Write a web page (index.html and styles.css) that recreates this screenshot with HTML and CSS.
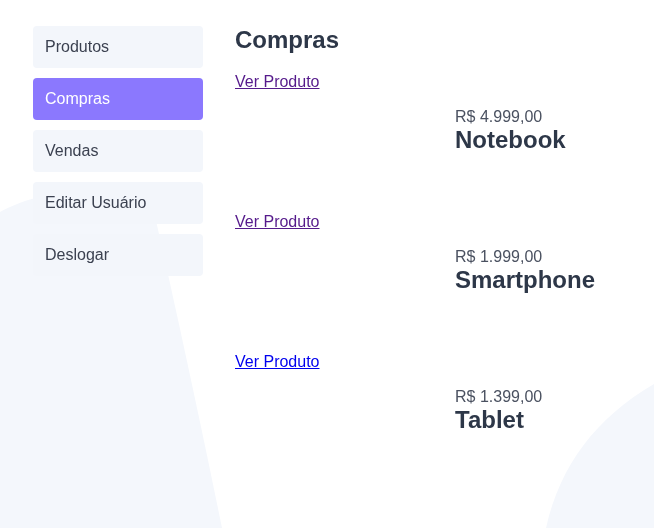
FILE: index.html
```html
<!DOCTYPE html>
<html lang="pt-BR">
<head>
<meta charset="utf-8">
<title>Compras</title>
<link rel="stylesheet" href="styles.css">
</head>
<body>
<svg class="bg" width="654" height="528" viewBox="0 0 654 528" aria-hidden="true">
  <path class="blob" d="M0,212 C20,200 70,186 118,184 L154,212 C174,300 200,420 222,528 L0,528 Z"/>
  <path class="blob" d="M546,528 C560,465 596,418 654,384 L654,528 Z"/>
</svg>
<div class="layout">
  <nav class="sidebar">
    <a class="nav-item" href="#">Produtos</a>
    <a class="nav-item active" href="#">Compras</a>
    <a class="nav-item" href="#">Vendas</a>
    <a class="nav-item" href="#">Editar Usuário</a>
    <a class="nav-item" href="#">Deslogar</a>
  </nav>
  <main class="content">
    <h2 class="title">Compras</h2>
    <div class="item">
      <a class="link visited" href="#">Ver Produto</a>
      <div class="row">
        <div class="thumb"></div>
        <div class="info">
          <div class="price">R$ 4.999,00</div>
          <div class="name">Notebook</div>
        </div>
      </div>
    </div>
    <div class="item">
      <a class="link visited" href="#">Ver Produto</a>
      <div class="row">
        <div class="thumb"></div>
        <div class="info">
          <div class="price">R$ 1.999,00</div>
          <div class="name">Smartphone</div>
        </div>
      </div>
    </div>
    <div class="item">
      <a class="link" href="#">Ver Produto</a>
      <div class="row">
        <div class="thumb"></div>
        <div class="info">
          <div class="price">R$ 1.399,00</div>
          <div class="name">Tablet</div>
        </div>
      </div>
    </div>
  </main>
</div>
</body>
</html>
```
FILE: styles.css
```css
html, body {
  margin: 0;
  padding: 0;
  background: #ffffff;
  font-family: "Liberation Sans", Arial, sans-serif;
  width: 654px;
  height: 528px;
  overflow: hidden;
}

.bg {
  position: fixed;
  left: 0;
  top: 0;
  z-index: 0;
}

.blob {
  fill: #f4f7fc;
}

.layout {
  position: relative;
  z-index: 1;
  display: flex;
  gap: 32px;
  padding: 26px 33px;
}

.sidebar {
  display: flex;
  flex-direction: column;
  gap: 10px;
  width: 170px;
  flex-shrink: 0;
}

.nav-item {
  display: block;
  height: 42px;
  box-sizing: border-box;
  padding: 12px 12px;
  line-height: 18px;
  font-size: 16px;
  color: #3b4150;
  text-decoration: none;
  background: #f3f6fb;
  border-radius: 4px;
}

.nav-item.active {
  background: #8b78fe;
  color: #ffffff;
}

.content {
  flex: 1;
}

.title {
  margin: 0 0 19px 0;
  font-size: 24px;
  line-height: 28px;
  font-weight: bold;
  color: #2d3748;
}

.item {
  margin-bottom: 59px;
}

.link {
  display: inline-block;
  font-size: 16px;
  line-height: 18px;
  color: #0000ee;
  margin-bottom: 17px;
}

.link.visited {
  color: #551a8b;
}

.row {
  display: flex;
}

.thumb {
  width: 220px;
  flex-shrink: 0;
}

.price {
  font-size: 16px;
  line-height: 18px;
  color: #4a5160;
}

.name {
  font-size: 24px;
  line-height: 28px;
  font-weight: bold;
  color: #2d3748;
}
```
